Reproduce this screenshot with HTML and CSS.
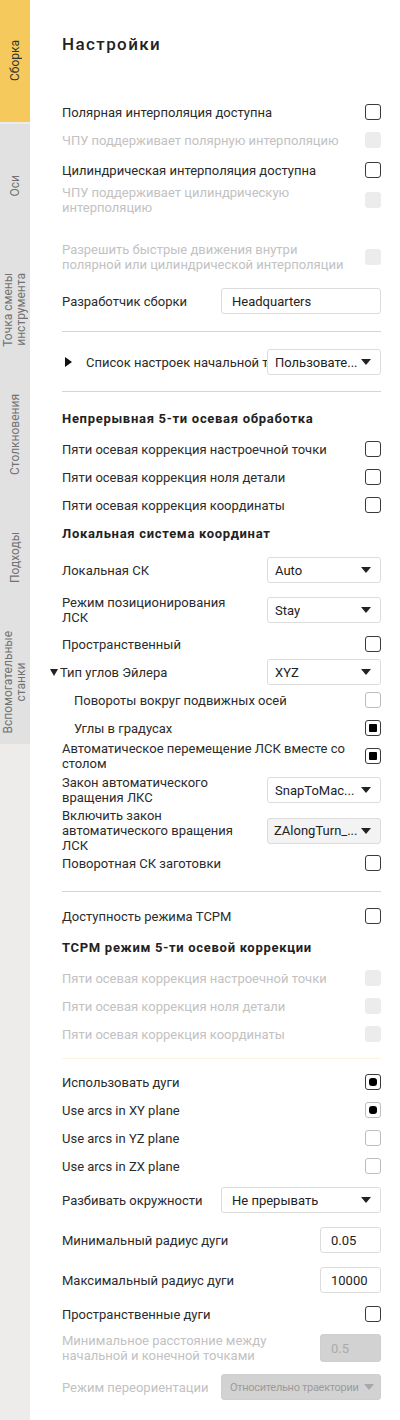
FILE: index.html
```html
<!DOCTYPE html>
<html lang="ru">
<head>
<meta charset="utf-8">
<title>Настройки</title>
<link rel="stylesheet" href="styles.css">
</head>
<body>
<div class="app">
  <nav class="sidebar">
    <div class="tab active"><span>Сборка</span></div>
    <div class="tab"><span>Оси</span></div>
    <div class="tab"><span>Точка смены<br>инструмента</span></div>
    <div class="tab"><span>Столкновения</span></div>
    <div class="tab"><span>Подходы</span></div>
    <div class="tab"><span>Вспомогательные<br>станки</span></div>
  </nav>
  <main class="main">
    <h1 class="title">Настройки</h1>

    <div class="row r28 m44"><span class="label">Полярная интерполяция доступна</span><span class="cb"></span></div>
    <div class="row r28 dis"><span class="label">ЧПУ поддерживает полярную интерполяцию</span><span class="cb cb-dis"></span></div>
    <div class="row r28 m2"><span class="label">Цилиндрическая интерполяция доступна</span><span class="cb"></span></div>
    <div class="row r30 m1 dis"><span class="label narrow">ЧПУ поддерживает цилиндрическую интерполяцию</span><span class="cb cb-dis"></span></div>
    <div class="row r30 m27 dis"><span class="label">Разрешить быстрые движения внутри<br>полярной или цилиндрической интерполяции</span><span class="cb cb-dis"></span></div>
    <div class="row r26 m16"><span class="label">Разработчик сборки</span><span class="input w160">Headquarters</span></div>

    <hr class="sep m17">

    <div class="row r26 m17"><span class="label clip"><span class="tri-right"></span><span class="cliptext">Список настроек начальной точки</span></span><span class="select w114"><span class="val">Пользовате...</span><i class="arr"></i></span></div>

    <hr class="sep m16">

    <div class="row r28 m12"><span class="head">Непрерывная 5-ти осевая обработка</span></div>
    <div class="row r28 m3"><span class="label">Пяти осевая коррекция настроечной точки</span><span class="cb"></span></div>
    <div class="row r28"><span class="label">Пяти осевая коррекция ноля детали</span><span class="cb"></span></div>
    <div class="row r28"><span class="label">Пяти осевая коррекция координаты</span><span class="cb"></span></div>
    <div class="row r28"><span class="head">Локальная система координат</span></div>
    <div class="row r26 m10"><span class="label">Локальная СК</span><span class="select w114"><span class="val">Auto</span><i class="arr"></i></span></div>
    <div class="row r30 m12"><span class="label narrow2">Режим позиционирования ЛСК</span><span class="select w114"><span class="val">Stay</span><i class="arr"></i></span></div>
    <div class="row r28 m5"><span class="label">Пространственный</span><span class="cb"></span></div>
    <div class="row r26 m1"><span class="label out"><span class="tri-down"></span>Тип углов Эйлера</span><span class="select w114"><span class="val">XYZ</span><i class="arr"></i></span></div>
    <div class="row r28 m1"><span class="label ind">Повороты вокруг подвижных осей</span><span class="cb cb-light"></span></div>
    <div class="row r26 m1"><span class="label ind">Углы в градусах</span><span class="cb cb-sq"></span></div>
    <div class="row r30"><span class="label narrow3">Автоматическое перемещение ЛСК вместе со столом</span><span class="cb cb-sq"></span></div>
    <div class="row r30 m4"><span class="label narrow2">Закон автоматического вращения ЛКС</span><span class="select w114"><span class="val">SnapToMac...</span><i class="arr"></i></span></div>
    <div class="row r45 m3"><span class="label narrow2">Включить закон автоматического вращения ЛСК</span><span class="select w114 grey"><span class="val">ZAlongTurn_...</span><i class="arr"></i></span></div>
    <div class="row r20"><span class="label">Поворотная СК заготовки</span><span class="cb"></span></div>

    <hr class="sep m18">

    <div class="row r28 m10"><span class="label">Доступность режима TCPM</span><span class="cb"></span></div>
    <div class="row r28 m3"><span class="head">TCPM режим 5-ти осевой коррекции</span></div>
    <div class="row r28 m3 dis"><span class="label">Пяти осевая коррекция настроечной точки</span><span class="cb cb-dis"></span></div>
    <div class="row r28 dis"><span class="label">Пяти осевая коррекция ноля детали</span><span class="cb cb-dis"></span></div>
    <div class="row r28 dis"><span class="label">Пяти осевая коррекция координаты</span><span class="cb cb-dis"></span></div>

    <hr class="sep faint m10">

    <div class="row r28 m9"><span class="label">Использовать дуги</span><span class="cb cb-dot"></span></div>
    <div class="row r28"><span class="label">Use arcs in XY plane</span><span class="cb cb-light cb-dot"></span></div>
    <div class="row r28"><span class="label">Use arcs in YZ plane</span><span class="cb cb-light"></span></div>
    <div class="row r28"><span class="label">Use arcs in ZX plane</span><span class="cb cb-light"></span></div>
    <div class="row r26 m7"><span class="label">Разбивать окружности</span><span class="select w160"><span class="val">Не прерывать</span><i class="arr"></i></span></div>
    <div class="row r26 m14"><span class="label">Минимальный радиус дуги</span><span class="input w61">0.05</span></div>
    <div class="row r26 m14"><span class="label">Максимальный радиус дуги</span><span class="input w61">10000</span></div>
    <div class="row r28 m7"><span class="label">Пространственные дуги</span><span class="cb"></span></div>
    <div class="row r30 m5 dis"><span class="label">Минимальное расстояние между<br>начальной и конечной точками</span><span class="input w61 h28 input-dis">0.5</span></div>
    <div class="row r26 m11 dis"><span class="label">Режим переориентации</span><span class="select w160 select-dis"><span class="val">Относительно траектории</span><i class="arr"></i></span></div>
  </main>
</div>
</body>
</html>
```

FILE: styles.css
```css
* { box-sizing: border-box; }
html, body { margin: 0; padding: 0; background: #ffffff; }
body {
  font-family: Roboto, "Noto Sans", "Liberation Sans", sans-serif;
  font-size: 13px;
  color: #2b2b2b;
}
.app { display: flex; min-height: 1420px; width: 400px; overflow: hidden; }

.sidebar {
  width: 30px;
  flex: 0 0 30px;
  background: #edecea;
  display: flex;
  flex-direction: column;
}
.tab {
  height: 124px;
  background: #e1e1e1;
  display: flex;
  align-items: center;
  justify-content: center;
  color: #727272;
  font-size: 12px;
  line-height: 13px;
}
.tab span {
  writing-mode: vertical-rl;
  transform: rotate(180deg);
  text-align: center;
  white-space: nowrap;
}
.tab.active { background: #f6c95c; color: #333; height: 122px; margin-bottom: 2px; }

.main {
  flex: 1 1 0;
  min-width: 0;
  padding: 34px 19px 0 32px;
  display: flex;
  flex-direction: column;
}
.title {
  margin: 0;
  font-size: 17px;
  line-height: 20px;
  font-weight: 500;
  letter-spacing: 1.4px;
  color: #222;
}

.row {
  display: flex;
  align-items: center;
  justify-content: space-between;
  line-height: 15px;
  min-width: 0;
}
.r20 { min-height: 20px; }
.r26 { min-height: 26px; }
.r28 { min-height: 28px; }
.r30 { min-height: 30px; }
.r45 { min-height: 45px; }
.m1 { margin-top: 1px; }
.m2 { margin-top: 2px; }
.m3 { margin-top: 3px; }
.m4 { margin-top: 4px; }
.m5 { margin-top: 5px; }
.m7 { margin-top: 7px; }
.m9 { margin-top: 9px; }
.m10 { margin-top: 10px; }
.m11 { margin-top: 11px; }
.m12 { margin-top: 12px; }
.m14 { margin-top: 14px; }
.m16 { margin-top: 16px; }
.m17 { margin-top: 17px; }
.m18 { margin-top: 18px; }
.m27 { margin-top: 27px; }
.m44 { margin-top: 44px; }

.label { color: #2b2b2b; }
.dis .label { color: #c2c2c2; }
.narrow { max-width: 240px; }
.narrow2 { max-width: 186px; }
.narrow3 { max-width: 290px; }
.ind { padding-left: 12px; }
.out { margin-left: -12px; display: flex; align-items: center; }
.clip {
  flex: 1 1 0;
  min-width: 0;
  overflow: hidden;
  white-space: nowrap;
  display: flex;
  align-items: center;
}
.cliptext { min-width: 0; overflow: hidden; white-space: nowrap; }
.tri-right {
  display: inline-block;
  width: 0; height: 0;
  border-top: 5px solid transparent;
  border-bottom: 5px solid transparent;
  border-left: 7px solid #111;
  margin: 0 14px 0 3px;
  flex: 0 0 auto;
}
.tri-down {
  display: inline-block;
  width: 0; height: 0;
  border-left: 4px solid transparent;
  border-right: 4px solid transparent;
  border-top: 7px solid #222;
  margin-right: 2px;
}
.head {
  font-weight: 700;
  letter-spacing: 0.7px;
  color: #222;
}

.cb {
  width: 16px;
  height: 16px;
  flex: 0 0 16px;
  border: 1px solid #3a3a3a;
  border-radius: 3px;
  background: #fff;
  position: relative;
}
.cb-light { border-color: #bdbdbd; }
.cb-dis { border-color: #ececec; background: #ececec; }
.cb-sq::after {
  content: "";
  position: absolute;
  left: 3px; top: 3px;
  width: 8px; height: 8px;
  background: #000;
  border-radius: 1px;
}
.cb-dot::after {
  content: "";
  position: absolute;
  left: 3px; top: 3px;
  width: 8px; height: 8px;
  background: #000;
  border-radius: 3px;
}

.sep {
  border: 0;
  height: 1px;
  background: #f2d48c;
  margin-bottom: 0;
  margin-left: 0;
  margin-right: 0;
}
.sep.faint { background: #fbf4e0; }

.select, .input {
  height: 26px;
  border: 1px solid #dcdcdc;
  border-radius: 3px;
  background: #fff;
  display: flex;
  align-items: center;
  padding-left: 10px;
  color: #222;
  position: relative;
  flex: 0 0 auto;
  white-space: nowrap;
}
.select { padding-right: 24px; }
.val { overflow: hidden; white-space: nowrap; min-width: 0; }
.w114 { width: 114px; padding-left: 7px; padding-right: 18px; }
.w160 { width: 160px; }
.w61 { width: 61px; }
.h28 { height: 28px; }
.select.grey { background: #f3f3f3; padding-left: 6px; }
.arr {
  position: absolute;
  right: 9px;
  top: 50%;
  margin-top: -3px;
  width: 0; height: 0;
  border-left: 5px solid transparent;
  border-right: 5px solid transparent;
  border-top: 6px solid #222;
}
.input-dis { background: #d2d2d2; border-color: #cfcfcf; color: #ababab; }
.select-dis {
  background: #d2d2d2;
  border-color: #cfcfcf;
  color: #9c9c9c;
  font-size: 11px;
  letter-spacing: -0.3px;
  padding-left: 8px;
  padding-right: 18px;
}
.select-dis .arr { border-top-color: #a8a8a8; right: 6px; }
```
